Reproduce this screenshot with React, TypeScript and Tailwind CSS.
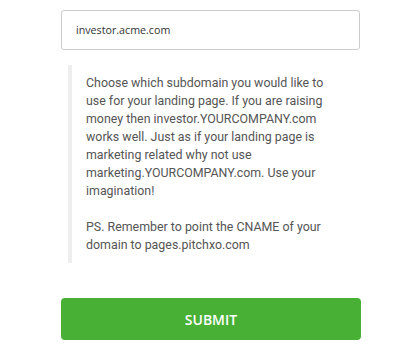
export default function App() {
  return (
    <div className="bg-white w-[419px] h-[350px] pt-[10px]">
      <div className="ml-[61px] w-[300px]">
        <input
          type="text"
          defaultValue="investor.acme.com"
          className="block w-[299px] h-[40px] border border-[#cccccc] rounded-[3px] pl-[14px] text-[10.7px] text-[#333] outline-none"
          style={{ fontFamily: '"Open Sans", sans-serif' }}
        />
        <blockquote
          className="mt-[15px] ml-[7px] w-[292px] border-l-[4px] border-[#eeeeee] pl-[14px] pr-[20px] pt-[9px] pb-[9px] text-[12.4px] leading-[18px] text-[#555]"
          style={{ fontFamily: 'Roboto, sans-serif' }}
        >
          <p>
            Choose which subdomain you would like to use for your landing page. If you are raising money then
            investor.YOURCOMPANY.com works well. Just as if your landing page is marketing related why not use
            marketing.YOURCOMPANY.com. Use your imagination!
          </p>
          <p className="mt-[18px]">PS. Remember to point the CNAME of your domain to pages.pitchxo.com</p>
        </blockquote>
        <button
          className="mt-[35px] block w-[300px] h-[42px] rounded-[4px] bg-[#48b035] text-white text-[14px] font-semibold"
          style={{ fontFamily: '"Open Sans", sans-serif' }}
        >
          SUBMIT
        </button>
      </div>
    </div>
  );
}
